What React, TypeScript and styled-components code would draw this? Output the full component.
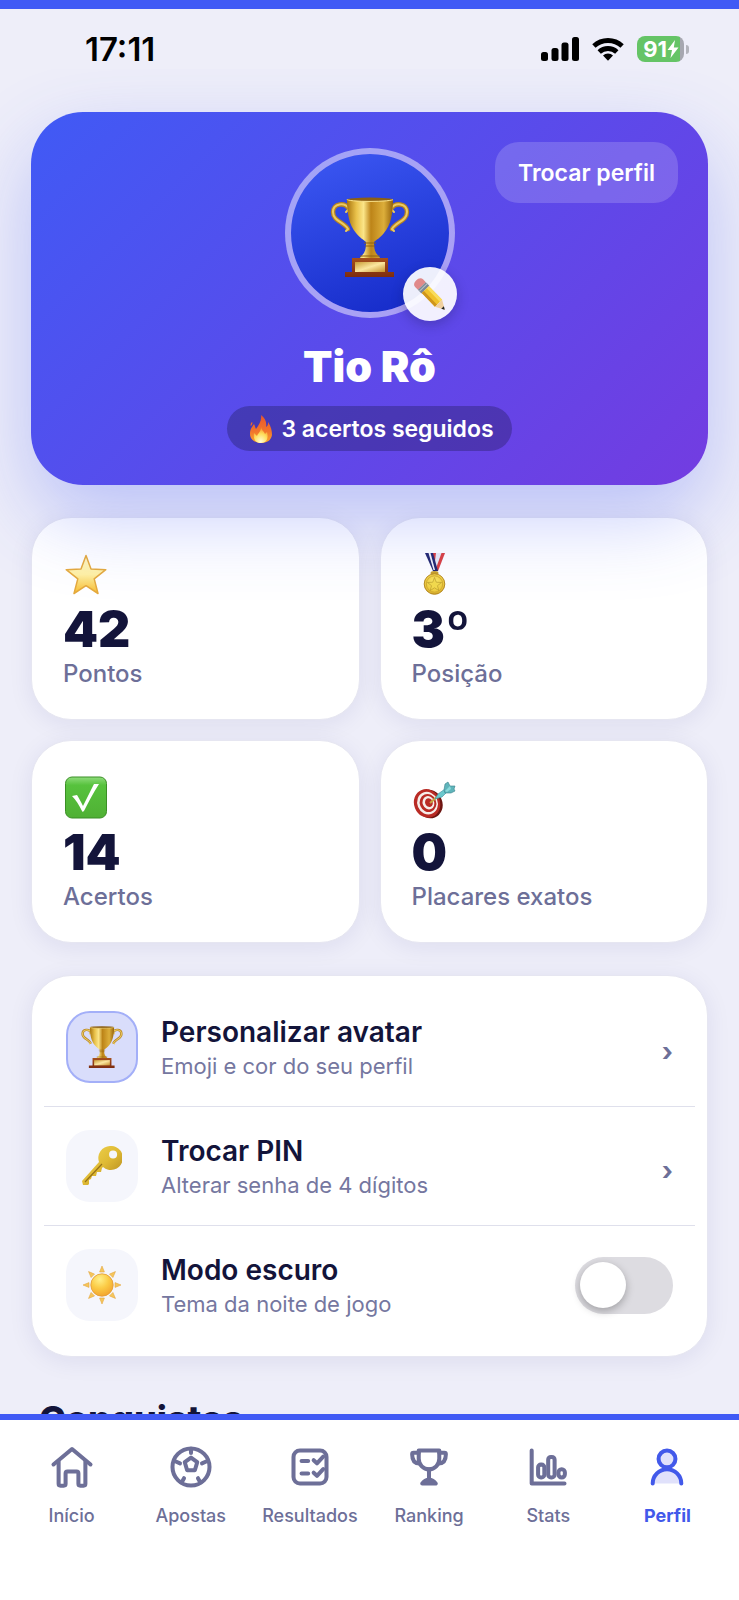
import React, { useState } from 'react'
import styled, { createGlobalStyle } from 'styled-components'

const GlobalStyle = createGlobalStyle`
  *, *::before, *::after {
    box-sizing: border-box;
  }

  body {
    margin: 0;
    background-color: #eeeef9;
    color: #13143a;
    font-family: Inter, 'Noto Sans', sans-serif;
  }

  button {
    border: 0;
    padding: 0;
    background: none;
    color: inherit;
    font: inherit;
    cursor: pointer;
  }
`

const Shell = styled.div`
  display: flex;
  flex-direction: column;
  height: 100vh;
  border-top: 9px solid #405af5;
`

const StatusBar = styled.header`
  display: flex;
  align-items: center;
  justify-content: space-between;
  padding: 20px 50px 0 85px;
`

const Clock = styled.time`
  color: #000;
  font-size: 33px;
  font-weight: 600;
  line-height: 40px;
`

const StatusIcons = styled.div`
  display: flex;
  align-items: center;
  gap: 13px;
`

const Battery = styled.span`
  display: flex;
  align-items: center;
  gap: 2px;

  &::after {
    content: '';
    width: 3px;
    height: 9px;
    border-radius: 0 3px 3px 0;
    background-color: #b3b4bc;
  }
`

const BatteryLevel = styled.span`
  display: flex;
  align-items: center;
  height: 26px;
  padding: 0 5px 0 6px;
  border-radius: 8px;
  background: linear-gradient(90deg, #65c466 92%, #a6a7b0 92%);
  color: #fff;
  font-size: 22px;
  font-weight: 700;
`

const Content = styled.main`
  flex: 1;
  min-height: 0;
  padding: 43px 31px 0;
  overflow-y: auto;
  scrollbar-width: none;
`

const Hero = styled.section`
  position: relative;
  display: flex;
  flex-direction: column;
  align-items: center;
  padding: 36px 30px 34px;
  border-radius: 52px;
  background: linear-gradient(135deg, #405af5 0%, #733ce1 100%);
  box-shadow: 0 32px 80px rgba(66, 90, 245, 0.3);
  color: #fff;
  z-index: 1;
`

const SwitchProfile = styled.button`
  position: absolute;
  top: 30px;
  right: 30px;
  padding: 1px 23px 0;
  border-radius: 24px;
  background-color: rgba(255, 255, 255, 0.17);
  font-size: 23px;
  font-weight: 600;
  line-height: 60px;
`

const Avatar = styled.div`
  position: relative;
  display: grid;
  place-items: center;
  width: 170px;
  height: 170px;
  padding-top: 8px;
  border: 6px solid rgba(255, 255, 255, 0.48);
  border-radius: 50%;
  background: linear-gradient(160deg, #3f5bf6 0%, #1126c4 100%) border-box;
  background-clip: padding-box;
`

const EditAvatar = styled.button`
  position: absolute;
  right: -8px;
  bottom: -9px;
  display: grid;
  place-items: center;
  width: 54px;
  height: 54px;
  border-radius: 50%;
  background-color: rgba(255, 255, 255, 0.92);
  box-shadow: 0 4px 12px rgba(20, 20, 60, 0.25);
`

const Name = styled.h1`
  margin: 24px 0 16px;
  font-size: 43px;
  font-weight: 900;
  line-height: 48px;
`

const Streak = styled.p`
  display: flex;
  align-items: center;
  gap: 8px;
  margin: 0;
  padding: 1px 18px 0 22px;
  border-radius: 23px;
  background-color: rgba(20, 20, 60, 0.3);
  font-size: 23px;
  font-weight: 600;
  line-height: 44px;
`

const Card = styled.div`
  border: 1px solid #e6e6f1;
  border-radius: 40px;
  background-color: #fff;
  box-shadow: 0 4px 24px rgba(30, 30, 110, 0.08);
`

const Stats = styled.section`
  display: grid;
  grid-template-columns: 1fr 1fr;
  gap: 20px;
  margin: 32px 0;
`

const StatCard = styled(Card)`
  display: flex;
  flex-direction: column;
  align-items: flex-start;
  padding: 35px 31px 28px;
`

const StatValue = styled.strong`
  margin-top: 4px;
  font-size: 50px;
  font-weight: 900;
  line-height: 56px;
`

const StatLabel = styled.span`
  color: #6d6f98;
  font-size: 24px;
  font-weight: 500;
  line-height: 34px;
`

const Settings = styled(Card)`
  padding: 12px;
`

const Row = styled.div`
  display: flex;
  align-items: center;
  gap: 23px;
  width: 100%;
  padding: 23px 22px;
  text-align: left;

  &:not(:last-child) {
    border-bottom: 1px solid #dfe0ec;
  }
`

const RowIcon = styled.span<{ $active?: boolean }>`
  display: grid;
  place-items: center;
  width: 72px;
  height: 72px;
  border: 2px solid ${({ $active }) => ($active ? '#a3aff8' : '#f5f6fc')};
  border-radius: 24px;
  background-color: ${({ $active }) => ($active ? '#d9ddfb' : '#f5f6fc')};
`

const RowText = styled.span`
  display: flex;
  flex: 1;
  flex-direction: column;
`

const RowTitle = styled.span`
  font-size: 28px;
  font-weight: 600;
  line-height: 38px;
`

const RowHint = styled.span`
  color: #7577a0;
  font-size: 22px;
  line-height: 30px;
`

const Chevron = styled.span`
  padding-top: 10px;
  color: #6d6f98;
  font-size: 26px;
  font-weight: 700;
  line-height: 30px;
`

const Toggle = styled.input`
  display: flex;
  align-items: center;
  width: 98px;
  height: 57px;
  margin: 0;
  padding: 0 5px;
  border-radius: 29px;
  background-color: #dddce1;
  appearance: none;
  cursor: pointer;

  &::before {
    content: '';
    width: 46px;
    height: 46px;
    border-radius: 50%;
    background-color: #fff;
    box-shadow: 0 3px 8px rgba(0, 0, 0, 0.28);
  }

  &:checked {
    justify-content: flex-end;
    background-color: #405af5;
  }
`

const SectionTitle = styled.h2`
  margin: 40px 0 0;
  padding: 0 8px;
  font-size: 36px;
  font-weight: 800;
  line-height: 44px;
`

const TabBar = styled.nav`
  display: grid;
  grid-template-columns: repeat(6, 1fr);
  padding: 25px 12px 72px;
  border-top: 6px solid #405af5;
  background-color: #fff;
`

const Tab = styled.a<{ $active?: boolean }>`
  display: flex;
  flex-direction: column;
  align-items: center;
  gap: 15px;
  color: ${({ $active }) => ($active ? '#4259ea' : '#6d6f98')};
  font-size: 18px;
  font-weight: ${({ $active }) => ($active ? 700 : 500)};
  line-height: 24px;
  text-decoration: none;
`

const TabIcon = styled.svg`
  width: 44px;
  height: 44px;
  fill: none;
  stroke: currentColor;
  stroke-width: 2.2;
  stroke-linecap: round;
  stroke-linejoin: round;
`

const HiddenSvg = styled.svg`
  position: absolute;
  width: 0;
  height: 0;
`

// gradients shared by the emoji drawings
function Gradients() {
  return (
    <HiddenSvg aria-hidden="true">
      <defs>
        <linearGradient id="gold" x1="0" x2="1" y1="0" y2="0">
          <stop offset="0" stopColor="#a8740f" />
          <stop offset="0.2" stopColor="#e9c14a" />
          <stop offset="0.36" stopColor="#fbe588" />
          <stop offset="0.52" stopColor="#bd8418" />
          <stop offset="0.8" stopColor="#dcae3a" />
          <stop offset="1" stopColor="#94620b" />
        </linearGradient>
        <linearGradient id="plate" x1="0" x2="1" y1="0" y2="1">
          <stop offset="0" stopColor="#c99b35" />
          <stop offset="0.5" stopColor="#fbe7a0" />
          <stop offset="1" stopColor="#c4902c" />
        </linearGradient>
        <linearGradient id="wood" x1="0" x2="0" y1="0" y2="1">
          <stop offset="0" stopColor="#a6501c" />
          <stop offset="1" stopColor="#7d2c10" />
        </linearGradient>
        <linearGradient id="star" x1="0" x2="0" y1="0" y2="1">
          <stop offset="0" stopColor="#fff6c4" />
          <stop offset="0.5" stopColor="#fff1a4" />
          <stop offset="1" stopColor="#f8bd2e" />
        </linearGradient>
        <linearGradient id="flame" x1="0" x2="0" y1="0" y2="1">
          <stop offset="0" stopColor="#e8552d" />
          <stop offset="0.6" stopColor="#f1762c" />
          <stop offset="1" stopColor="#fba92f" />
        </linearGradient>
        <radialGradient id="flameCore" cx="0.5" cy="0.9" r="0.8">
          <stop offset="0" stopColor="#fffbd5" />
          <stop offset="0.6" stopColor="#fede5c" />
          <stop offset="1" stopColor="#f99a31" />
        </radialGradient>
        <linearGradient id="green" x1="0" x2="0" y1="0" y2="1">
          <stop offset="0" stopColor="#8fdc7c" />
          <stop offset="0.2" stopColor="#57c23d" />
          <stop offset="1" stopColor="#4fb034" />
        </linearGradient>
        <radialGradient id="coin" cx="0.5" cy="0.4" r="0.6">
          <stop offset="0" stopColor="#fdec6a" />
          <stop offset="0.8" stopColor="#edc93a" />
          <stop offset="1" stopColor="#c69a25" />
        </radialGradient>
        <linearGradient id="key" x1="0" x2="1" y1="0" y2="1">
          <stop offset="0" stopColor="#f2d957" />
          <stop offset="0.5" stopColor="#dfba34" />
          <stop offset="1" stopColor="#a87d18" />
        </linearGradient>
        <radialGradient id="sun" cx="0.4" cy="0.25" r="0.8">
          <stop offset="0" stopColor="#fff08a" />
          <stop offset="0.5" stopColor="#fbcb45" />
          <stop offset="1" stopColor="#f1a02e" />
        </radialGradient>
      </defs>
    </HiddenSvg>
  )
}

function Trophy({ size }: { size: number }) {
  return (
    <svg width={size} height={size} viewBox="0 0 80 80" aria-hidden="true">
      <g fill="none" stroke="#b58322" strokeWidth="4.500" strokeLinecap="round">
        <path d="M19 12C15 5 3 6 3 15c0 9 11 10 15 17" />
        <path d="M61 12c4-7 16-6 16 3 0 9-11 10-15 17" />
      </g>
      <g fill="none" stroke="#eccb62" strokeWidth="2" strokeLinecap="round">
        <path d="M19 12C15 5 3 6 3 15c0 9 11 10 15 17l-2 2M19 12l-3 3" />
        <path d="M61 12c4-7 16-6 16 3 0 9-11 10-15 17l2 2M61 12l3 3" />
      </g>
      <path
        d="M17 2h46c0 14-2 26-9 34-4 5-8 7-10 9 0 4 0 7 2 11l5 6H29l5-6c2-4 2-7 2-11-2-2-6-4-10-9-7-8-9-20-9-34z"
        fill="url(#gold)"
      />
      <ellipse cx="40" cy="2.4" rx="23" ry="1.8" fill="#8c5f13" />
      <path d="M17 2.4a23 2 0 0 0 46 0" fill="none" stroke="#fbe590" />
      <path d="M34 46h12M35 49h10M30 59h20" stroke="#8f6012" strokeWidth="1" />
      <path d="M22 61h36v14h6v5H15v-5h7z" fill="url(#wood)" />
      <path d="M25 65h30v10H25z" fill="url(#plate)" />
    </svg>
  )
}

function Pencil() {
  return (
    <svg width="34" height="34" viewBox="0 0 34 34" aria-hidden="true">
      <g transform="translate(4 4) rotate(46)">
        <path d="M3-5.500h4v11H3c-3 0-4-3-4-5.500s1-5.500 4-5.500z" fill="#e0898a" />
        <path d="M7-5.500h5v11H7z" fill="#7d8894" />
        <path d="M9-5.500v11" stroke="#b9c2c9" strokeWidth="1" />
        <path d="M12-5h19V5H12z" fill="#f0c12b" />
        <path d="M12-5h19v3H12z" fill="#f9dc5c" />
        <path d="M12 2h19v3H12z" fill="#cf951c" />
        <path d="m31-5 9 5-9 5z" fill="#f0d0a0" />
        <path d="M36.800-1.800 40 0l-3.200 1.800z" fill="#252525" />
      </g>
    </svg>
  )
}

function Flame() {
  return (
    <svg width="24" height="29" viewBox="0 0 24 29" aria-hidden="true">
      <path
        d="M12 0c4 3 6 7 5 12 2-1 2-3 2-5 3 4 4 9 4 13-1 6-6 8-11 8S1 25 1 19c0-5 2-7 4-10 1 2 1 3 2 5 3-4 6-9 5-14zM3 7c1 1 0 3-1 4-1-1 0-3 1-4z"
        fill="url(#flame)"
      />
      <path
        d="M12 12c1 4 3 4 4 7l2-2c2 7-1 11-6 11S4 25 5 18l3 3c1-3 4-4 4-9z"
        fill="url(#flameCore)"
      />
    </svg>
  )
}

function Star() {
  return (
    <svg width="44" height="44" viewBox="0 0 44 44" aria-hidden="true">
      <path
        d="M23 2.500l5 13.500 14.800.7-11.600 9.200L35 40.500 23 32.700 11 40.500l3.800-14.600L3.200 16.700 18 16z"
        fill="url(#star)"
        stroke="#e5aa3e"
        strokeWidth="1.500"
        strokeLinejoin="round"
      />
    </svg>
  )
}

function Medal() {
  return (
    <svg width="44" height="44" viewBox="0 0 44 44" aria-hidden="true">
      <path d="M24 0h9l-7 19h-6z" fill="#e8ebf5" />
      <path d="M29.500 0H33l-7 18h-3z" fill="#dc4040" />
      <path d="M24 0h-4.500l3 12z" fill="#dc4040" />
      <path d="M13 0h8l5 18h-5z" fill="#24296f" />
      <path d="M16.500 0h2l4.500 17h-1.500z" fill="#f3f4fa" />
      <ellipse cx="22.500" cy="20" rx="4" ry="2" fill="#c9a02b" />
      <circle cx="22.500" cy="31" r="10.300" fill="url(#coin)" stroke="#b88c22" />
      <circle cx="22.500" cy="31" r="8.200" fill="none" stroke="#caa22c" strokeWidth="0.800" />
      <path
        d="m22.500 24.500 1.800 4.700 5.200.3-4 3.200 1.300 4.800-4.300-2.700-4.300 2.700 1.300-4.800-4-3.200 5.200-.3z"
        fill="#f3da4c"
        stroke="#b39427"
        strokeWidth="0.600"
      />
    </svg>
  )
}

function Check() {
  return (
    <svg width="44" height="44" viewBox="0 0 44 44" aria-hidden="true">
      <rect x="2.500" y="1" width="41" height="41" rx="6.500" fill="url(#green)" stroke="#3b8f26" />
      <path
        d="m9 20 5-1c2 3 4 7 6 11 4-8 8-16 11-22h5c-6 9-11 19-15 27-1 1-2 1-2 0-3-6-6-11-10-15z"
        fill="#fff"
      />
    </svg>
  )
}

function Target() {
  return (
    <svg width="44" height="44" viewBox="0 0 44 44" aria-hidden="true">
      <g transform="rotate(-22 16 27)">
        <ellipse cx="17" cy="28.500" rx="13" ry="14.500" fill="#6d1612" />
        <ellipse cx="15" cy="27" rx="13" ry="14.500" fill="#b92b25" />
        <ellipse cx="15.500" cy="27" rx="10.200" ry="11.500" fill="#f6eeea" />
        <ellipse cx="16" cy="27" rx="8.200" ry="9.200" fill="#b92b25" />
        <ellipse cx="16.500" cy="27" rx="5.800" ry="6.800" fill="#f6eeea" />
        <ellipse cx="17" cy="27" rx="3.800" ry="4.500" fill="#b92b25" />
      </g>
      <path d="m18 27 8-7" stroke="#c7a441" strokeWidth="2" />
      <path d="m23 23 3-5 7-5 2 3-5 5z" fill="#6cc8cd" stroke="#3c8f9c" strokeWidth="0.600" />
      <path d="m32 14 1-6 3-2 2 4 5 0-1 3 1 2-4 2-6 0z" fill="#5fb5bb" stroke="#377f8a" strokeWidth="0.600" />
      <path d="m33 15 5-5 1 3-4 3z" fill="#8adadb" />
    </svg>
  )
}

function Key() {
  return (
    <svg width="40" height="40" viewBox="0 0 40 40" aria-hidden="true">
      <path
        d="M28 0a12 12 0 1 1-7 21l-1 1-1 4-4 0-1 4-4 0-1 3-2 1v4l-1 1H1l-1-4 17-19A12 12 0 0 1 28 0zm3 4.500a4 4 0 1 0 .1 8 4 4 0 0 0 0-8z"
        fill="url(#key)"
      />
      <path d="M3 36 20 18" stroke="#94701a" strokeWidth="1.200" />
    </svg>
  )
}

function Sun() {
  const rays = [0, 45, 90, 135, 180, 225, 270, 315]
  return (
    <svg width="40" height="40" viewBox="0 0 40 40" aria-hidden="true">
      {rays.map((angle) => (
        <path
          key={angle}
          d="m20 1 2.400 6h-4.800z"
          fill="#f6c65a"
          stroke="#e4a844"
          strokeWidth="0.600"
          transform={`rotate(${angle} 20 20)`}
        />
      ))}
      <circle cx="20" cy="20" r="11.200" fill="url(#sun)" stroke="#e29a35" strokeWidth="0.800" />
    </svg>
  )
}

const stats = [
  { icon: <Star />, value: '42', label: 'Pontos' },
  { icon: <Medal />, value: '3º', label: 'Posição' },
  { icon: <Check />, value: '14', label: 'Acertos' },
  { icon: <Target />, value: '0', label: 'Placares exatos' },
]

const tabs = [
  {
    label: 'Início',
    icon: (
      <>
        <path d="M1.900 10.600 12 2.200l10.100 8.400" />
        <path d="M4.700 9v12.200a1 1 0 0 0 1 1h1.800a1 1 0 0 0 1-1v-5.700a1 1 0 0 1 1-1h5a1 1 0 0 1 1 1v5.700a1 1 0 0 0 1 1h1.800a1 1 0 0 0 1-1V9" />
      </>
    ),
  },
  {
    label: 'Apostas',
    icon: (
      <>
        <circle cx="12" cy="12" r="10.100" />
        <path d="m12 6.900 3.400 2.500-1.300 4.400H9.900L8.600 9.400z" />
        <path d="M12 2v2.300M2.800 8.600 6 10M21.200 8.600 18 10M6.900 20.400l1.300-2.300M17.100 20.400l-1.300-2.300" />
      </>
    ),
  },
  {
    label: 'Resultados',
    icon: (
      <>
        <rect x="3" y="3" width="18" height="18" rx="3.500" />
        <path d="M7.400 8.700h3.600M7.400 15.500h3.600M14 8.300l1.800 1.700 3.400-3.600M14 15.100l1.800 1.700 3.400-3.700" />
      </>
    ),
  },
  {
    label: 'Ranking',
    icon: (
      <>
        <path d="M6.400 3h11.200v4.500c0 3.300-2.600 5.800-5.600 5.800s-5.600-2.500-5.600-5.800z" />
        <path d="M6.400 4.200H3.600c-.6 0-.8.300-.8.800 0 2.700 1 5 4 5.100M17.600 4.200h2.800c.6 0 .8.300.8.800 0 2.700-1 5-4 5.100M12 13.300v4.500" />
        <path d="M8.300 21c.6-.9 1.600-2.100 3.700-2.100s3.100 1.200 3.700 2.100z" fill="currentColor" />
      </>
    ),
  },
  {
    label: 'Stats',
    icon: (
      <>
        <path d="M3.100 3v18H21" />
        <rect x="6.600" y="10.700" width="3.400" height="7" rx="1.500" />
        <rect x="12.100" y="6.500" width="3.500" height="11.200" rx="1.500" />
        <rect x="17.700" y="13.200" width="3.500" height="4.500" rx="1.700" />
      </>
    ),
  },
  {
    label: 'Perfil',
    active: true,
    icon: (
      <>
        <path d="M4.200 21a7.800 7.800 0 0 1 15.600 0" fill="#e0e1fb" />
        <circle cx="12" cy="7.600" r="4.600" fill="#e0e1fb" />
      </>
    ),
  },
]

function PhoneStatus() {
  return (
    <StatusBar>
      <Clock>17:11</Clock>
      <StatusIcons>
        <svg width="38" height="24" viewBox="0 0 38 24" aria-label="Sinal">
          <rect x="0" y="15" width="7" height="9" rx="2.500" />
          <rect x="10.500" y="11" width="7" height="13" rx="2.500" />
          <rect x="20.500" y="5.500" width="7" height="18.500" rx="2.500" />
          <rect x="31" y="0" width="7" height="24" rx="2.500" />
        </svg>
        <svg width="32" height="24" viewBox="0 0 32 24" aria-label="Wi-Fi">
          <g fill="none" stroke="#000" strokeWidth="4.800">
            <path d="M1.900 9.100a20.500 20.500 0 0 1 28.200 0" />
            <path d="M7.200 15a12.800 12.800 0 0 1 17.600 0" />
          </g>
          <path d="M16 23.800l-5-5.200a6.800 6.800 0 0 1 10 0z" />
        </svg>
        <Battery>
          <BatteryLevel>
            91
            <svg width="12" height="18" viewBox="0 0 11 18" fill="#fff" aria-hidden="true">
              <path d="M7.500 0 0 10h4.500L3 18l8-10.500H6.300z" />
            </svg>
          </BatteryLevel>
        </Battery>
      </StatusIcons>
    </StatusBar>
  )
}

function App() {
  const [dark, setDark] = useState(false)

  return (
    <>
      <GlobalStyle />
      <Gradients />
      <Shell>
        <PhoneStatus />
        <Content>
          <Hero>
            <SwitchProfile type="button">Trocar perfil</SwitchProfile>
            <Avatar>
              <Trophy size={80} />
              <EditAvatar type="button" aria-label="Editar avatar">
                <Pencil />
              </EditAvatar>
            </Avatar>
            <Name>Tio Rô</Name>
            <Streak>
              <Flame />3 acertos seguidos
            </Streak>
          </Hero>

          <Stats>
            {stats.map(({ icon, value, label }) => (
              <StatCard key={label}>
                {icon}
                <StatValue>{value}</StatValue>
                <StatLabel>{label}</StatLabel>
              </StatCard>
            ))}
          </Stats>

          <Settings>
            <Row as="button" type="button">
              <RowIcon $active>
                <Trophy size={42} />
              </RowIcon>
              <RowText>
                <RowTitle>Personalizar avatar</RowTitle>
                <RowHint>Emoji e cor do seu perfil</RowHint>
              </RowText>
              <Chevron>›</Chevron>
            </Row>
            <Row as="button" type="button">
              <RowIcon>
                <Key />
              </RowIcon>
              <RowText>
                <RowTitle>Trocar PIN</RowTitle>
                <RowHint>Alterar senha de 4 dígitos</RowHint>
              </RowText>
              <Chevron>›</Chevron>
            </Row>
            <Row as="label" htmlFor="dark-mode">
              <RowIcon>
                <Sun />
              </RowIcon>
              <RowText>
                <RowTitle>Modo escuro</RowTitle>
                <RowHint>Tema da noite de jogo</RowHint>
              </RowText>
              <Toggle
                id="dark-mode"
                type="checkbox"
                checked={dark}
                onChange={(e) => setDark(e.target.checked)}
              />
            </Row>
          </Settings>

          <SectionTitle>Conquistas</SectionTitle>
        </Content>
        <TabBar>
          {tabs.map(({ label, icon, active }) => (
            <Tab key={label} href="#" $active={active}>
              <TabIcon viewBox="0 0 24 24" aria-hidden="true">
                {icon}
              </TabIcon>
              {label}
            </Tab>
          ))}
        </TabBar>
      </Shell>
    </>
  )
}

export default App
